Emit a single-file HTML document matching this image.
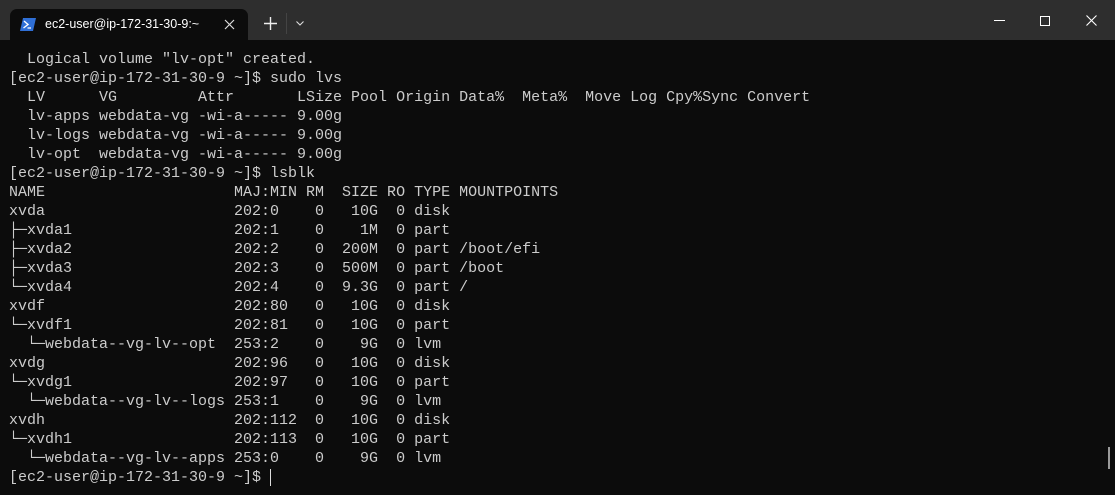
<!DOCTYPE html>
<html><head><meta charset="utf-8"><style>
html,body{margin:0;padding:0;}
body{width:1115px;height:495px;background:#0c0c0c;position:relative;overflow:hidden;font-family:"Liberation Sans",sans-serif;}
.title{position:absolute;left:0;top:0;width:1115px;height:40px;background:#2e2e2e;}
.tab{position:absolute;left:10px;top:9px;width:238px;height:31px;background:#0c0c0c;border-radius:7px 7px 0 0;}
.tabtxt{position:absolute;left:35px;top:8px;color:#fff;font-size:12.5px;}
.term{position:absolute;left:9px;top:50px;margin:0;color:#cccccc;font-family:"Liberation Mono","DejaVu Sans Mono",monospace;font-size:15px;line-height:19px;white-space:pre;}
</style></head><body>
<div class="title">
 <div class="tab">
  <svg style="position:absolute;left:10px;top:9px" width="16" height="13" viewBox="0 0 16 13"><path d="M3 0H16L13 13H0Z" fill="#2f6fd6"/><path d="M4 3L8 6.5L3.5 10" stroke="#fff" stroke-width="1.4" fill="none"/><path d="M7.5 10H11" stroke="#fff" stroke-width="1.3"/></svg>
  <div class="tabtxt">ec2-user@ip-172-31-30-9:~</div>
  <svg style="position:absolute;left:214px;top:10px" width="11" height="11"><path d="M1 1L10 10M10 1L1 10" stroke="#ddd" stroke-width="1.2"/></svg>
 </div>
 <svg style="position:absolute;left:264px;top:17px" width="13" height="13"><path d="M6.5 0V13M0 6.5H13" stroke="#eee" stroke-width="1.4"/></svg>
 <div style="position:absolute;left:286px;top:13px;width:1px;height:21px;background:#444"></div>
 <svg style="position:absolute;left:296px;top:21px" width="8" height="5"><path d="M0.5 0.5L4 4L7.5 0.5" stroke="#ddd" stroke-width="1.1" fill="none"/></svg>
 <div style="position:absolute;left:994px;top:20px;width:11px;height:1px;background:#fff"></div>
 <div style="position:absolute;left:1040px;top:16px;width:8px;height:8px;border:1px solid #fff"></div>
 <svg style="position:absolute;left:1086px;top:15px" width="11" height="11"><path d="M0.5 0.5L10.5 10.5M10.5 0.5L0.5 10.5" stroke="#fff" stroke-width="1.1"/></svg>
</div>
<pre class="term">  Logical volume "lv-opt" created.
[ec2-user@ip-172-31-30-9 ~]$ sudo lvs
  LV      VG         Attr       LSize Pool Origin Data%  Meta%  Move Log Cpy%Sync Convert
  lv-apps webdata-vg -wi-a----- 9.00g
  lv-logs webdata-vg -wi-a----- 9.00g
  lv-opt  webdata-vg -wi-a----- 9.00g
[ec2-user@ip-172-31-30-9 ~]$ lsblk
NAME                     MAJ:MIN RM  SIZE RO TYPE MOUNTPOINTS
xvda                     202:0    0   10G  0 disk
├─xvda1                  202:1    0    1M  0 part
├─xvda2                  202:2    0  200M  0 part /boot/efi
├─xvda3                  202:3    0  500M  0 part /boot
└─xvda4                  202:4    0  9.3G  0 part /
xvdf                     202:80   0   10G  0 disk
└─xvdf1                  202:81   0   10G  0 part
  └─webdata--vg-lv--opt  253:2    0    9G  0 lvm
xvdg                     202:96   0   10G  0 disk
└─xvdg1                  202:97   0   10G  0 part
  └─webdata--vg-lv--logs 253:1    0    9G  0 lvm
xvdh                     202:112  0   10G  0 disk
└─xvdh1                  202:113  0   10G  0 part
  └─webdata--vg-lv--apps 253:0    0    9G  0 lvm
[ec2-user@ip-172-31-30-9 ~]$ </pre>
<div style="position:absolute;left:270px;top:469px;width:1px;height:17px;background:#ddd"></div>
<div style="position:absolute;left:1108px;top:447px;width:2px;height:22px;background:#9a9a9a"></div>
</body></html>
